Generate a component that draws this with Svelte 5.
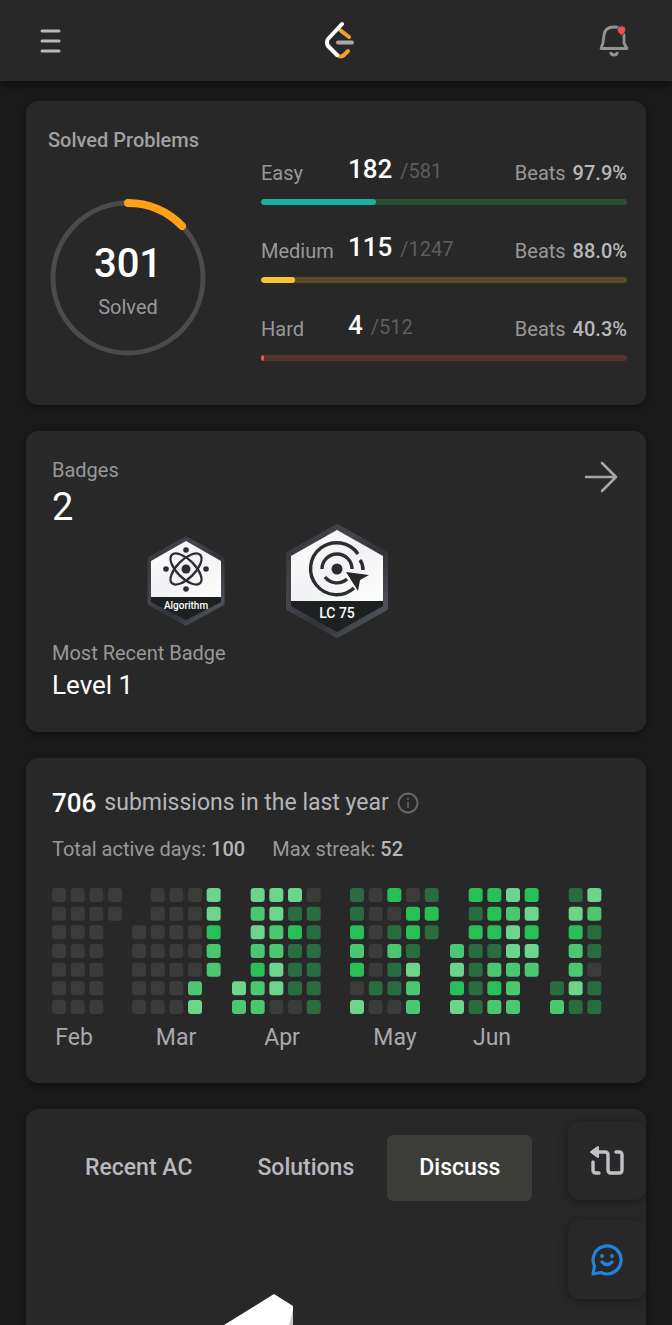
<script>
  const levels = [
    { name: 'Easy', solved: 182, total: 581, beats: '97.9%', tone: 'easy' },
    { name: 'Medium', solved: 115, total: 1247, beats: '88.0%', tone: 'medium' },
    { name: 'Hard', solved: 4, total: 512, beats: '40.3%', tone: 'hard' }
  ];

  // One string per week, one character per day: 0-4 is the activity level.
  const months = [
    { label: 'Feb', x: 0, labelX: 22, weeks: ['0000000', '0000000', '0000000', '00.....'] },
    { label: 'Mar', x: 80, labelX: 124, weeks: ['..00000', '0000000', '0000000', '0000034', '44233..'] },
    { label: 'Apr', x: 180, labelX: 230, weeks: ['.....43', '4343233', '4433440', '4121110', '0111111'] },
    { label: 'May', x: 298, labelX: 343, weeks: ['1123204', '0000010', '2013110', '0221433', '121....'] },
    { label: 'Jun', x: 398, labelX: 440, weeks: ['...3424', '2121111', '2221323', '4344333', '24243..'] },
    { label: '', x: 498, labelX: 540, weeks: ['.....13', '1423341', '4311011'] }
  ];
  const pitch = 56 / 3;
  const cells = months.flatMap((m) =>
    m.weeks.flatMap((w, c) =>
      [...w].map((level, r) => ({ x: m.x + c * pitch, y: r * pitch, level })).filter((d) => d.level !== '.')
    )
  );

  const tabs = ['Recent AC', 'Solutions', 'Discuss'];
  let active = $state('Discuss');
</script>

<div class="page">
  <header>
    <button class="menu" aria-label="Menu">
      <svg width="24" height="26" viewBox="0 0 24 26"><path d="M4 3H21M4 13H21M4 23H21" stroke="#b9b9bd" stroke-width="3" stroke-linecap="round" /></svg>
    </button>
    <a href="#home" aria-label="Home">
      <svg width="32" height="40" viewBox="0 0 32 40" fill="none" stroke-width="4" stroke-linecap="round" stroke-linejoin="round">
        <path d="M16 9 25 16M13 34Q17 37 20 34L24 30" stroke="#f0a02c" />
        <path d="M14 21.500H28" stroke="#a9a9ac" />
        <path d="M18 3 4 18Q2 21 4 25L13 34" stroke="#fff" />
      </svg>
    </a>
    <button aria-label="Notifications">
      <svg width="32" height="36" viewBox="0 0 32 36" fill="none" stroke="#929294" stroke-width="2.800" stroke-linejoin="round">
        <path d="M3 25.500H29L26 20V12Q25 4 16 4Q7 4 6 12L5 20Z" />
        <path d="M12.500 29Q13 32 16 32Q19 32 19.500 29" />
        <path d="M23 3C28 2 29 8 25 11.500Q23 13 21.500 11C18 7 19 3 23 3Z" fill="#e8504a" stroke="#6b2725" stroke-width="1" />
      </svg>
    </button>
  </header>

  <main>
    <section class="card solved">
      <div class="summary">
        <h2>Solved Problems</h2>
        <div class="ring">
          <svg width="160" height="160" viewBox="0 0 160 160" fill="none" aria-hidden="true">
            <circle cx="80" cy="80" r="75" stroke="#4b4b4b" stroke-width="5" />
            <path d="M80 5A75 75 0 0 1 134 28" stroke="#ffa116" stroke-width="8" stroke-linecap="round" />
          </svg>
          <div class="count"><strong>301</strong><span>Solved</span></div>
        </div>
      </div>
      <div class="levels">
        {#each levels as l}
          <div class="level {l.tone}">
            <div class="line">
              <span class="name">{l.name}</span>
              <span class="value"><b>{l.solved}</b><i>/{l.total}</i></span>
              <span class="beats">Beats <b>{l.beats}</b></span>
            </div>
            <div class="track"><div class="fill" style="width: {(l.solved / l.total) * 100}%"></div></div>
          </div>
        {/each}
      </div>
    </section>

    <section class="card badges">
      <div class="head">
        <div>
          <h3>Badges</h3>
          <div class="total">2</div>
        </div>
        <a href="#badges" aria-label="All badges">
          <svg width="34" height="34" viewBox="0 0 34 34" fill="none" stroke="#a6a6a6" stroke-width="2.600" stroke-linecap="round" stroke-linejoin="round"><path d="M2 17H32M18 3 32 17 18 31" /></svg>
        </a>
      </div>
      <div class="medals">
        <svg width="80" height="90" viewBox="0 0 80 90">
          <defs>
            <linearGradient id="rim" x1="0" y1="0" x2="1" y2="1"><stop offset="0" stop-color="#34343a" /><stop offset=".35" stop-color="#45454d" /><stop offset=".6" stop-color="#303236" /><stop offset="1" stop-color="#5b5e68" /></linearGradient>
            <linearGradient id="plate" x1="0" y1="0" x2="1" y2="1"><stop offset="0" stop-color="#fff" /><stop offset=".5" stop-color="#f2f1f3" /><stop offset="1" stop-color="#fff" /></linearGradient>
          </defs>
          <path d="M40 3 76 23V67L40 87 4 67V23Z" fill="url(#rim)" stroke="url(#rim)" stroke-width="5" stroke-linejoin="round" />
          <path d="M40 5 75 25V62H5V25Z" fill="url(#plate)" />
          <path d="M5 61H75V66L40 84 5 66Z" fill="#1c201f" />
          <g fill="none" stroke="#2b2d30" stroke-width="2.200">
            <ellipse cx="40" cy="33" rx="20" ry="9" transform="rotate(45 40 33)" />
            <ellipse cx="40" cy="33" rx="20" ry="9" transform="rotate(-45 40 33)" />
          </g>
          <g fill="#2b2d30"><circle cx="40" cy="33" r="4.500" /><circle cx="40" cy="14" r="2.800" /><circle cx="40" cy="53" r="2.800" /><circle cx="20" cy="33" r="2.800" /><circle cx="60" cy="33" r="2.800" /></g>
          <text x="40" y="73" class="medal-small">Algorithm</text>
        </svg>
        <svg width="104" height="116" viewBox="0 0 104 116">
          <path d="M52 4 100 31V85L52 112 4 85V31Z" fill="url(#rim)" stroke="url(#rim)" stroke-width="6" stroke-linejoin="round" />
          <path d="M52 7 98 33V79H6V33Z" fill="url(#plate)" />
          <path d="M6 78H98V83L52 109 6 83Z" fill="#1c201f" />
          <g fill="none" stroke="#2b2d30" stroke-width="3.400">
            <path d="M73 31A26 26 0 1 0 69 65" />
            <path d="M75 37Q78 41 78 47" />
            <path d="M37 46A15 15 0 0 1 67 46" />
            <path d="M40 54A15 15 0 0 0 62 56" />
          </g>
          <circle cx="52" cy="46" r="5.500" fill="#2b2d30" />
          <path d="M61 49 84 52 75 57 73 68Z" fill="#25272a" />
          <text x="52" y="95" class="medal-large">LC 75</text>
        </svg>
      </div>
      <h3>Most Recent Badge</h3>
      <div class="recent">Level 1</div>
    </section>

    <section class="card activity">
      <div class="subs"><b>706</b><span>submissions in the last year</span>
        <svg width="22" height="22" viewBox="0 0 22 22" fill="none" stroke="#676767" stroke-width="2"><circle cx="11" cy="11" r="9.500" /><path d="M11 10V16M11 6V8" stroke-width="1.500" /></svg>
      </div>
      <div class="stats"><span>Total active days: <b>100</b></span><span>Max streak: <b>52</b></span></div>
      <svg class="heat" viewBox="0 0 568 164" role="img" aria-label="Daily submissions">
        {#each cells as c}
          <rect x={c.x} y={c.y} width="14" height="14" rx="3" class="l{c.level}" />
        {/each}
        {#each months as m}
          <text x={m.labelX} y="157">{m.label}</text>
        {/each}
      </svg>
    </section>

    <section class="card feed">
      <nav>
        {#each tabs as t}
          <button class:active={active === t} onclick={() => (active = t)}>{t}</button>
        {/each}
      </nav>
      <svg class="box" width="224" height="31" viewBox="0 0 224 31" aria-hidden="true">
        <path d="M0 31 50 0 69 12V31Z" fill="#fff" />
        <path d="M69 16V31H65Z" fill="#c9c9c9" />
      </svg>
    </section>
  </main>

  <aside>
    <button aria-label="Switch version">
      <svg width="36" height="34" viewBox="0 0 36 34" fill="none" stroke="#c3c1c8" stroke-width="3.400" stroke-linecap="round" stroke-linejoin="round">
        <path d="M8 8H16Q19 8 19 11V26Q19 29 22 29H30Q33 29 33 26V11Q33 8 30 8H27" />
        <path d="M4 18V26Q4 29 7 29H10" />
        <path d="M9 3V13L2 8Z" fill="#c3c1c8" stroke-width="2" />
      </svg>
    </button>
    <button aria-label="Feedback">
      <svg width="34" height="34" viewBox="0 0 34 34" fill="none" stroke="#1f83e0" stroke-width="3.200" stroke-linecap="round" stroke-linejoin="round">
        <path d="M3 31 4.500 23A14 14 0 1 1 11 29.500Z" />
        <path d="M12 19Q17 24 22 19" />
        <circle cx="12" cy="13" r="1.900" fill="#1f83e0" stroke="none" /><circle cx="22" cy="13" r="1.900" fill="#1f83e0" stroke="none" />
      </svg>
    </button>
  </aside>
</div>

<style>
  :global(body) { background: #1a1a1a; }
  * { box-sizing: border-box; }
  .page { min-height: 100vh; display: flex; flex-direction: column; font-family: Roboto, sans-serif; color: #98989a; font-size: 20px; line-height: 24px; }
  button { border: 0; background: none; padding: 0; font: inherit; color: inherit; cursor: pointer; }
  svg { display: block; }
  h2, h3 { margin: 0; font-size: 20px; }
  h3 { font-weight: 400; }
  b { font-weight: 500; }
  header { height: 81px; padding: 0 42px 0 38px; display: flex; align-items: center; justify-content: space-between; background: #282828; box-shadow: 0 4px 8px #0c0f0d; }
  .menu { width: 44px; }
  main { flex: 1; display: flex; flex-direction: column; gap: 26px; padding: 20px 26px 0; }
  .card { background: #282828; border-radius: 12px; box-shadow: 0 3px 8px #0e110f; }

  .solved { height: 304px; display: flex; gap: 53px; padding: 27px 19px 0 22px; }
  .summary { width: 160px; }
  h2 { font-weight: 500; color: #a0a0a2; white-space: nowrap; }
  .ring { margin-top: 46px; display: grid; place-items: center; }
  .ring > * { grid-area: 1 / 1; }
  .count { display: flex; flex-direction: column; align-items: center; padding-top: 12px; }
  .count strong { color: #fff; font-size: 40px; line-height: 46px; font-weight: 500; }
  .count span { line-height: 40px; }
  .levels { flex: 1; padding-top: 26px; display: flex; flex-direction: column; gap: 27px; }
  .line { height: 45px; display: grid; grid-template-columns: 87px auto 1fr; align-items: start; }
  .name, .beats { padding-top: 7px; }
  .value { display: flex; align-items: baseline; gap: 8px; line-height: 30px; }
  .value b { color: #fff; font-size: 26px; }
  .value i { font-style: normal; color: #5d5d5d; }
  .beats { text-align: right; white-space: pre; }
  .beats b { color: #b8b8bc; margin-left: 2px; }
  .track { height: 6px; border-radius: 3px; overflow: hidden; }
  .fill { height: 100%; border-radius: 3px; }
  .easy .track { background: #2c4f31; } .easy .fill { background: #18b3a0; }
  .medium .track { background: #5b4e26; } .medium .fill { background: #f9c332; }
  .hard .track { background: #5b332e; } .hard .fill { background: #e5595f; }

  .badges { height: 301px; padding: 27px 26px 0; }
  .head { display: flex; justify-content: space-between; height: 65px; }
  .head a { padding: 2px; }
  .total { color: #fff; font-size: 38px; line-height: 50px; }
  .medals { height: 118px; padding: 0 0 2px 94px; display: flex; align-items: center; gap: 59px; }
  .medal-small, .medal-large { fill: #fff; text-anchor: middle; font-family: Roboto, sans-serif; font-size: 10px; font-weight: 500; }
  .medal-large { font-size: 14px; }
  .recent { color: #fff; font-size: 26px; line-height: 40px; }

  .activity { height: 325px; padding: 29px 26px 0; }
  .subs { display: flex; align-items: center; gap: 8px; font-size: 23px; line-height: 32px; color: #b6b6ba; }
  .subs b { color: #fff; font-size: 26px; }
  .stats { display: flex; gap: 27px; margin: 18px 0 27px; }
  .stats b { color: #b6b6ba; }
  .heat { width: 100%; }
  .heat text { fill: #a9a9ad; font-size: 23px; text-anchor: middle; }
  .l0 { fill: #3b3b3a; } .l1 { fill: #296c40; } .l2 { fill: #28bf56; } .l3 { fill: #4bc772; } .l4 { fill: #6cd48b; }

  .feed { flex: 1; display: flex; flex-direction: column; justify-content: space-between; border-radius: 12px 12px 0 0; padding: 26px 26px 0; }
  nav { display: flex; gap: 1px; padding-left: 1px; }
  nav button { padding: 0 32px; line-height: 66px; font-size: 23px; font-weight: 500; color: #b9b9bd; border-radius: 6px; }
  nav .active { background: #3c3d39; color: #fff; }
  .box { margin-left: 172px; }

  aside { position: fixed; right: 26px; bottom: 26px; display: flex; flex-direction: column; gap: 20px; }
  aside button { width: 78px; height: 79px; display: grid; place-items: center; border-radius: 12px; background: #282828; box-shadow: 0 2px 10px #171a17; }
</style>
